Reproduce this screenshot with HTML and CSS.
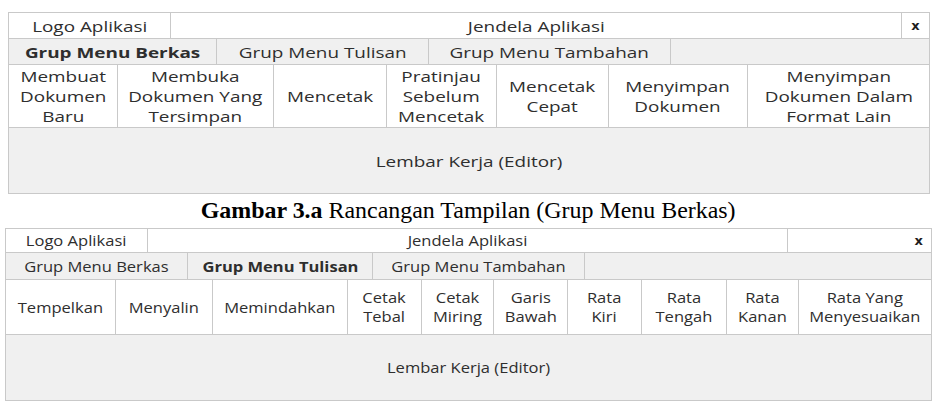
FILE: index.html
```html
<!DOCTYPE html>
<html lang="id">
<head>
    <meta charset="UTF-8">
    <meta name="viewport" content="width=device-width, initial-scale=1.0">
    <title>Rancangan Tampilan</title>
    <link rel="stylesheet" href="styles.css">
</head>
<body>
    <!-- rancangan 3.a : grup menu berkas -->
    <div class="window win-berkas">
        <div class="titlebar">
            <div class="cell"><span class="txt">Logo Aplikasi</span></div>
            <div class="cell"><span class="txt">Jendela Aplikasi</span></div>
            <div class="cell close"><span class="x">x</span></div>
        </div>
        <div class="tabs">
            <div class="cell"><span class="txt bold">Grup Menu Berkas</span></div>
            <div class="cell"><span class="txt">Grup Menu Tulisan</span></div>
            <div class="cell"><span class="txt">Grup Menu Tambahan</span></div>
            <div class="cell"></div>
        </div>
        <div class="tools">
            <div class="cell"><span class="txt">Membuat<br>Dokumen<br>Baru</span></div>
            <div class="cell"><span class="txt">Membuka<br>Dokumen Yang<br>Tersimpan</span></div>
            <div class="cell"><span class="txt">Mencetak</span></div>
            <div class="cell"><span class="txt">Pratinjau<br>Sebelum<br>Mencetak</span></div>
            <div class="cell"><span class="txt">Mencetak<br>Cepat</span></div>
            <div class="cell"><span class="txt">Menyimpan<br>Dokumen</span></div>
            <div class="cell"><span class="txt">Menyimpan<br>Dokumen Dalam<br>Format Lain</span></div>
        </div>
        <div class="editor"><span class="txt">Lembar Kerja (Editor)</span></div>
    </div>

    <p class="caption"><span class="caption-txt"><b>Gambar 3.a</b> Rancangan Tampilan (Grup Menu Berkas)</span></p>

    <!-- rancangan 3.b : grup menu tulisan -->
    <div class="window win-tulisan">
        <div class="titlebar">
            <div class="cell"><span class="txt">Logo Aplikasi</span></div>
            <div class="cell"><span class="txt">Jendela Aplikasi</span></div>
            <div class="cell close"><span class="x">x</span></div>
        </div>
        <div class="tabs">
            <div class="cell"><span class="txt">Grup Menu Berkas</span></div>
            <div class="cell"><span class="txt bold">Grup Menu Tulisan</span></div>
            <div class="cell"><span class="txt">Grup Menu Tambahan</span></div>
            <div class="cell"></div>
        </div>
        <div class="tools">
            <div class="cell"><span class="txt">Tempelkan</span></div>
            <div class="cell"><span class="txt">Menyalin</span></div>
            <div class="cell"><span class="txt">Memindahkan</span></div>
            <div class="cell"><span class="txt">Cetak<br>Tebal</span></div>
            <div class="cell"><span class="txt">Cetak<br>Miring</span></div>
            <div class="cell"><span class="txt">Garis<br>Bawah</span></div>
            <div class="cell"><span class="txt">Rata<br>Kiri</span></div>
            <div class="cell"><span class="txt">Rata<br>Tengah</span></div>
            <div class="cell"><span class="txt">Rata<br>Kanan</span></div>
            <div class="cell"><span class="txt">Rata Yang<br>Menyesuaikan</span></div>
        </div>
        <div class="editor"><span class="txt">Lembar Kerja (Editor)</span></div>
    </div>
</body>
</html>
```

FILE: styles.css
```css
body {
    margin: 0;
    padding: 0;
    background-color: #fff;
    font-family: "Open Sans", Arial, sans-serif;
    color: #2e2e2e;
}
.window {
    border: 1px solid #c9c9c9;
}
.win-berkas {
    margin: 12px 6px 0 8px;
    font-size: 15px;
    line-height: 20px;
}
.win-tulisan {
    margin: 4px 4px 0 5px;
    font-size: 14.5px;
    line-height: 19px;
}
.titlebar, .tabs, .tools {
    display: grid;
    border-bottom: 1px solid #c9c9c9;
}
.cell {
    display: flex;
    align-items: center;
    justify-content: center;
    text-align: center;
}
.cell + .cell {
    border-left: 1px solid #c9c9c9;
}
.txt {
    display: inline-block;
    white-space: nowrap;
}
.win-berkas .txt {
    transform: scaleX(1.26);
}
.win-tulisan .txt {
    transform: scaleX(1.14);
}
.bold {
    font-weight: 700;
}
.titlebar {
    background-color: #fff;
}
.tabs {
    background-color: #f0f0f0;
}
.tools {
    background-color: #fff;
}
.editor {
    display: flex;
    align-items: center;
    justify-content: center;
    height: 65px;
    background-color: #f0f0f0;
}
.x {
    font-family: "DejaVu Sans", sans-serif;
    font-weight: 700;
    font-size: 13px;
    color: #1e1e1e;
}

/* ukuran kolom tiap rancangan */
.win-berkas .titlebar {
    grid-template-columns: 161px 731px 28px;
    height: 25px;
}
.win-berkas .tabs {
    grid-template-columns: 207px 212px 242px 1fr;
    height: 25px;
}
.win-berkas .tools {
    grid-template-columns: 108px 156px 113px 110px 112px 139px 182px;
    height: 62px;
}
.win-tulisan .titlebar {
    grid-template-columns: 141px 640px 144px;
    height: 23px;
}
.win-tulisan .close {
    justify-content: flex-end;
    padding-right: 8px;
}
.win-tulisan .tabs {
    grid-template-columns: 181px 185px 212px 1fr;
    height: 26px;
}
.win-tulisan .tools {
    grid-template-columns: 109px 97px 135px 74px 72px 74px 74px 85px 72px 133px;
    height: 54px;
}

.caption {
    margin: 4px 0 0 0;
    font-family: "Liberation Serif", "Times New Roman", serif;
    font-size: 23px;
    line-height: 26px;
    text-align: center;
    color: #000;
}
.caption-txt {
    display: inline-block;
    transform: scaleX(1.04);
}
```
